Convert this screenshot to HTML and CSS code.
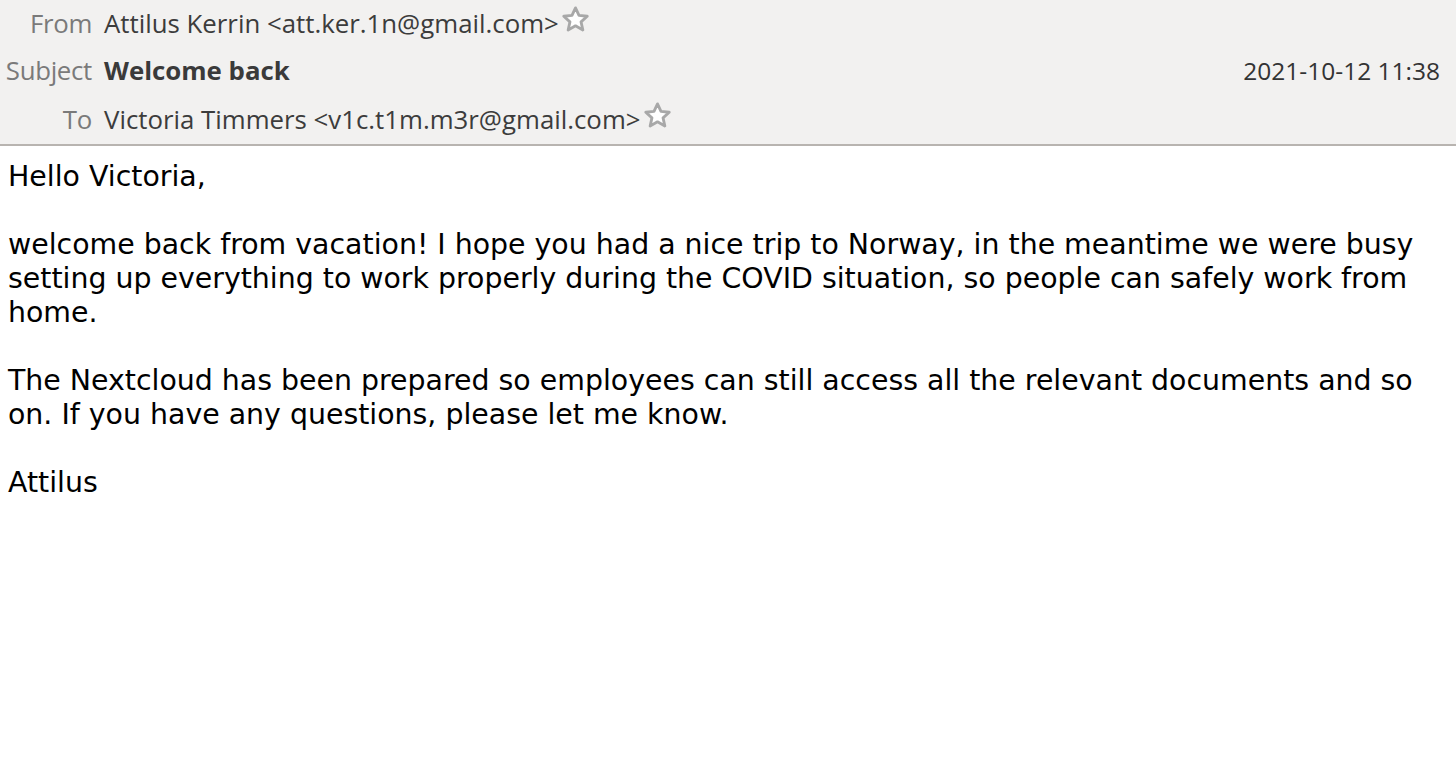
FILE: index.html
```html
<!DOCTYPE html>
<html>
<head>
<meta charset="utf-8">
<link rel="stylesheet" href="styles.css">
</head>
<body>
<div class="header">
  <div class="row row-from">
    <span class="label">From</span>
    <span class="value">Attilus Kerrin &lt;att.ker.1n@gmail.com&gt;</span>
    <svg class="star" viewBox="0 0 24 24"><path d="M12 3l2.7 5.8 6.4.7-4.8 4.3 1.4 6.3L12 16.9l-5.7 3.2 1.4-6.3-4.8-4.3 6.4-.7z" fill="#fff" stroke="#a8a8a8" stroke-width="2.2" stroke-linejoin="round"/></svg>
  </div>
  <div class="row row-subject">
    <span class="label">Subject</span>
    <span class="value subject">Welcome back</span>
    <span class="date">2021-10-12 11:38</span>
  </div>
  <div class="row row-to">
    <span class="label">To</span>
    <span class="value">Victoria Timmers &lt;v1c.t1m.m3r@gmail.com&gt;</span>
    <svg class="star" viewBox="0 0 24 24"><path d="M12 3l2.7 5.8 6.4.7-4.8 4.3 1.4 6.3L12 16.9l-5.7 3.2 1.4-6.3-4.8-4.3 6.4-.7z" fill="#fff" stroke="#a8a8a8" stroke-width="2.2" stroke-linejoin="round"/></svg>
  </div>
</div>
<div class="body">
  <p>Hello Victoria,</p>
  <p>welcome back from vacation! I hope you had a nice trip to Norway, in the meantime we were busy setting up everything to work properly during the COVID situation, so people can safely work from home.</p>
  <p>The Nextcloud has been prepared so employees can still access all the relevant documents and so on. If you have any questions, please let me know.</p>
  <p>Attilus</p>
</div>
</body>
</html>
```
FILE: styles.css
```css
html, body {
  margin: 0;
  padding: 0;
  background: #ffffff;
}
.header {
  background: #f2f1f0;
  border-bottom: 2px solid #b8b4b0;
  height: 144px;
  display: flex;
  flex-direction: column;
}
.row {
  display: flex;
  align-items: center;
  font-family: "Open Sans", sans-serif;
  font-size: 25.8px;
  color: #3c3c3c;
}
.row-from { height: 46px; }
.row-subject { height: 48px; }
.row-to { height: 50px; }
.label {
  width: 92px;
  text-align: right;
  color: #7a7a7a;
  margin-right: 12px;
  letter-spacing: -0.3px;
  white-space: nowrap;
}
.value {
  white-space: nowrap;
}
.subject {
  font-weight: 700;
  color: #3a3a3a;
}
.date {
  margin-left: auto;
  margin-right: 16px;
  font-size: 24.5px;
  color: #333;
}
.star {
  width: 31px;
  height: 31px;
  margin-left: 1px;
  margin-top: -8px;
}
.body {
  padding: 14px 20px 0 8px;
  font-family: "DejaVu Sans", sans-serif;
  font-size: 28.4px;
  line-height: 34px;
  color: #000;
}
.body p {
  margin: 0 0 34px 0;
}
```
